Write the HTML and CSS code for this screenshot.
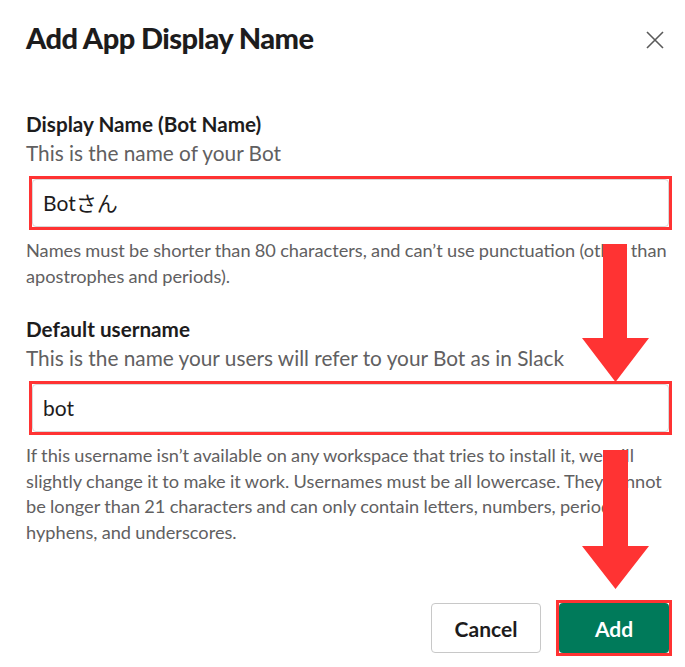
FILE: index.html
```html
<!DOCTYPE html>
<html lang="en">
<head>
<meta charset="utf-8">
<title>Add App Display Name</title>
<link rel="stylesheet" href="styles.css">
</head>
<body>
<div class="modal">
  <header class="modal-header">
    <h1 class="modal-title">Add App Display Name</h1>
    <button class="close-btn" aria-label="Close">
      <svg width="18" height="18" viewBox="0 0 18 18"><path d="M1 1L17 17M17 1L1 17" stroke="#5a5a5a" stroke-width="1.6" fill="none"/></svg>
    </button>
  </header>

  <section class="field field-first">
    <label class="field-label">Display Name (Bot Name)</label>
    <p class="field-desc">This is the name of your Bot</p>
    <div class="annot">
      <div class="input">Botさん</div>
    </div>
    <p class="field-help">Names must be shorter than 80 characters, and can’t use punctuation (other than apostrophes and periods).</p>
  </section>

  <section class="field field-second">
    <label class="field-label">Default username</label>
    <p class="field-desc">This is the name your users will refer to your Bot as in Slack</p>
    <div class="annot">
      <div class="input">bot</div>
    </div>
    <p class="field-help">If this username isn’t available on any workspace that tries to install it, we will slightly change it to make it work. Usernames must be all lowercase. They cannot be longer than 21 characters and can only contain letters, numbers, periods, hyphens, and underscores.</p>
  </section>

  <footer class="modal-footer">
    <button class="btn btn-cancel">Cancel</button>
    <div class="annot annot-btn"><button class="btn btn-add">Add</button></div>
  </footer>

  <svg class="arrow arrow-one" width="67" height="138" viewBox="0 0 67 138"><path d="M21 0H45V94H67L33.5 138L0 94H21Z" fill="#ff3333"/></svg>
  <svg class="arrow arrow-two" width="67" height="139" viewBox="0 0 67 139"><path d="M21 0H46V96H67L33.5 139L0 96H21Z" fill="#ff3333"/></svg>
</div>
</body>
</html>
```

FILE: styles.css
```css
* { box-sizing: border-box; }
html, body { margin: 0; padding: 0; background: #fff; }
body {
  font-family: Lato, "Noto Sans CJK JP", sans-serif;
  color: #1d1c1d;
  width: 685px;
  height: 667px;
  overflow: hidden;
}
.modal {
  position: relative;
  padding: 0 6px 0 26px;
  display: flex;
  flex-direction: column;
}
.modal-header {
  display: flex;
  justify-content: space-between;
  align-items: center;
  padding-top: 17px;
  height: 59px;
}
.modal-title {
  margin: 0;
  font-size: 29px;
  font-weight: 900;
  letter-spacing: -0.55px;
  color: #1d1c1d;
  line-height: 36px;
}
.close-btn {
  border: 0;
  background: none;
  padding: 0;
  margin-right: 15px;
  margin-top: 4px;
  width: 18px;
  height: 18px;
  display: flex;
}
.field { display: flex; flex-direction: column; }
.field-first { margin-top: 53px; }
.field-second { margin-top: 28px; }
.field-label {
  font-size: 20.7px;
  font-weight: 700;
  line-height: 24px;
  color: #1d1c1d;
}
.field-desc {
  margin: 4px 0 10px;
  font-size: 20.8px;
  line-height: 26px;
  color: #616061;
}
.annot {
  border: 3px solid #ff3333;
  margin-left: 3px;
  width: 643px;
}
.input {
  height: 48px;
  border: 1px solid #d8d8d8;
  border-radius: 4px;
  padding: 0 10px;
  font-size: 21px;
  line-height: 46px;
  color: #1d1c1d;
}
.field-help {
  margin: 8px 0 0;
  font-size: 18.2px;
  line-height: 25.5px;
  word-spacing: -0.4px;
  color: #616061;
}
.modal-footer {
  display: flex;
  justify-content: flex-end;
  align-items: center;
  gap: 15px;
  margin-top: 55px;
  padding-right: 7px;
}
.btn {
  font-family: Lato, sans-serif;
  font-size: 21px;
  font-weight: 700;
  height: 50px;
  border-radius: 4px;
  cursor: pointer;
}
.btn-cancel {
  width: 110px;
  background: #fff;
  border: 1px solid #c8c8c8;
  color: #1d1c1d;
}
.annot-btn {
  width: auto;
  margin-left: 0;
  padding: 0;
  display: flex;
}
.btn-add {
  width: 110px;
  height: 50px;
  background: #007a5a;
  border: 0;
  color: #fff;
}
.arrow { position: absolute; }
.arrow-one { left: 582px; top: 244px; }
.arrow-two { left: 582px; top: 450px; }
```
